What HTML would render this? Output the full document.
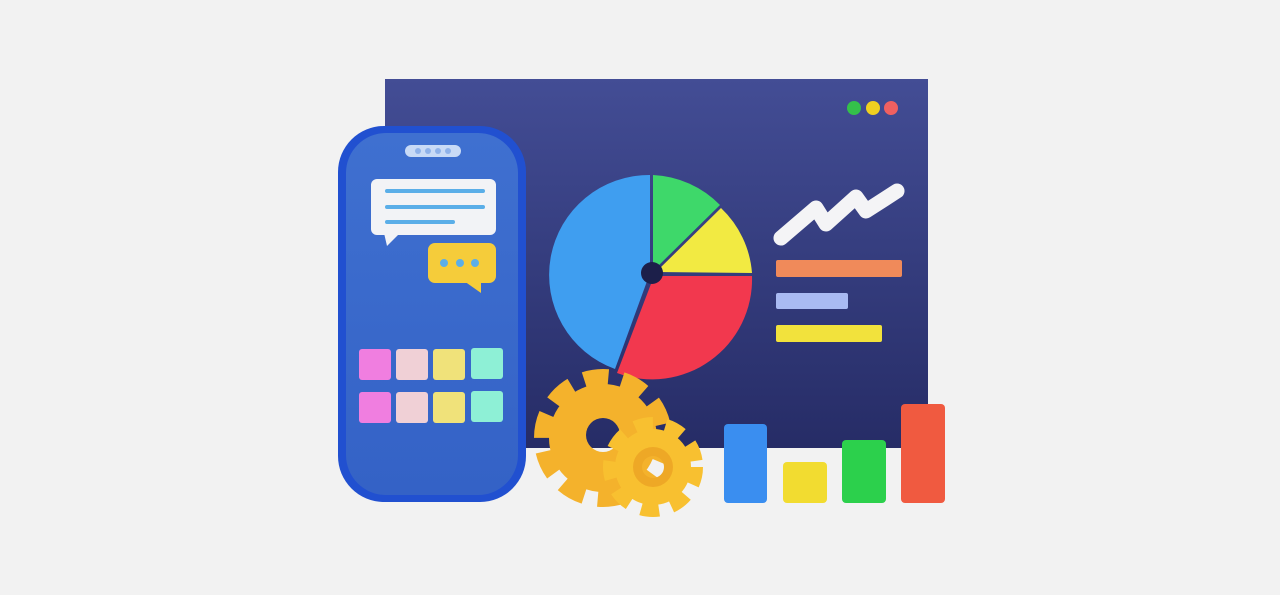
<!DOCTYPE html>
<html><head><meta charset="utf-8"><style>
html,body{margin:0;padding:0;background:#f2f2f2;width:1280px;height:595px;overflow:hidden}
</style></head><body>
<svg width="1280" height="595" viewBox="0 0 1280 595" xmlns="http://www.w3.org/2000/svg">
<defs>
<linearGradient id="bd" x1="0" y1="0" x2="0" y2="1"><stop offset="0" stop-color="#434d95"/><stop offset="1" stop-color="#262c66"/></linearGradient>
<linearGradient id="ph" x1="0" y1="0" x2="0" y2="1"><stop offset="0" stop-color="#3f70d0"/><stop offset="1" stop-color="#3462c6"/></linearGradient>
<mask id="m1"><rect x="0" y="0" width="1280" height="595" fill="#fff"/><circle cx="603" cy="435" r="17" fill="#000"/></mask>
<mask id="m2"><rect x="0" y="0" width="1280" height="595" fill="#fff"/><circle cx="653" cy="467" r="11" fill="#000"/></mask>
</defs>
<rect width="1280" height="595" fill="#f2f2f2"/>
<rect x="385" y="79" width="543" height="369" fill="url(#bd)"/>
<circle cx="854" cy="108" r="7" fill="#34c04a"/>
<circle cx="873" cy="108" r="7" fill="#f0d020"/>
<circle cx="891" cy="108" r="7" fill="#f06060"/>
<!-- pie -->
<path d="M650,273 L650,175 A100,100 0 0 0 615,369 Z" fill="#3f9ef0"/>
<path d="M653,271 L653,175 A100,100 0 0 1 720,205 Z" fill="#3ed86a"/>
<path d="M656,272 L721,208 A100,100 0 0 1 752,273 Z" fill="#f2ea42"/>
<path d="M654,276 L752,276 A100,100 0 0 1 617,373 Z" fill="#f2384e"/>
<circle cx="652" cy="273" r="11" fill="#1c1f4a"/>
<!-- zigzag -->
<path d="M781,238 L816,208 L826,224 L856,197 L866,211 L897,191" fill="none" stroke="#f4f4f6" stroke-width="15" stroke-linejoin="round" stroke-linecap="round"/>
<rect x="776" y="260" width="126" height="17" rx="2" fill="#f08a5a"/>
<rect x="776" y="293" width="72" height="16" rx="2" fill="#a9baf2"/>
<rect x="776" y="325" width="106" height="17" rx="2" fill="#f2e23c"/>
<!-- phone -->
<rect x="338" y="126" width="188" height="376" rx="46" fill="#2150d0"/>
<rect x="346" y="133" width="172" height="362" rx="40" fill="url(#ph)"/>
<rect x="405" y="145" width="56" height="12" rx="6" fill="#c8daf6"/>
<circle cx="418" cy="151" r="3" fill="#8fb2ea"/><circle cx="428" cy="151" r="3" fill="#8fb2ea"/><circle cx="438" cy="151" r="3" fill="#8fb2ea"/><circle cx="448" cy="151" r="3" fill="#8fb2ea"/>
<rect x="371" y="179" width="125" height="56" rx="6" fill="#f2f3f6"/>
<path d="M384,233 L387,246 L400,233 Z" fill="#f2f3f6"/>
<rect x="385" y="189" width="100" height="4" rx="2" fill="#5aaee8"/>
<rect x="385" y="205" width="100" height="4" rx="2" fill="#5aaee8"/>
<rect x="385" y="220" width="70" height="4" rx="2" fill="#5aaee8"/>
<rect x="428" y="243" width="68" height="40" rx="7" fill="#f5cc3a"/>
<path d="M464,281 L481,293 L481,281 Z" fill="#f5cc3a"/>
<circle cx="444" cy="263" r="4" fill="#5aaee8"/><circle cx="460" cy="263" r="4" fill="#5aaee8"/><circle cx="475" cy="263" r="4" fill="#5aaee8"/>
<g>
<rect x="359" y="349" width="32" height="31" rx="3" fill="#f07ee0"/>
<rect x="396" y="349" width="32" height="31" rx="3" fill="#f0d0d6"/>
<rect x="433" y="349" width="32" height="31" rx="3" fill="#f0e27a"/>
<rect x="471" y="348" width="32" height="31" rx="3" fill="#8ef0d6"/>
<rect x="359" y="392" width="32" height="31" rx="3" fill="#f07ee0"/>
<rect x="396" y="392" width="32" height="31" rx="3" fill="#f0d0d6"/>
<rect x="433" y="392" width="32" height="31" rx="3" fill="#f0e27a"/>
<rect x="471" y="391" width="32" height="31" rx="3" fill="#8ef0d6"/>
</g>
<!-- gears -->
<g mask="url(#m1)">
<circle cx="603" cy="438" r="54" fill="#f4b22c"/>
<circle cx="603" cy="438" r="60" fill="none" stroke="#f4b22c" stroke-width="18" stroke-dasharray="24 13.7"/>
</g>
<g mask="url(#m2)">
<circle cx="653" cy="467" r="38" fill="#f8c030"/>
<circle cx="653" cy="467" r="43" fill="none" stroke="#f8c030" stroke-width="14" stroke-dasharray="18 12.7"/>
<circle cx="653" cy="467" r="20" fill="#eea826"/>
</g>
<!-- bars -->
<rect x="724" y="424" width="43" height="79" rx="4" fill="#3a8ef0"/>
<rect x="783" y="462" width="44" height="41" rx="4" fill="#f2dc30"/>
<rect x="842" y="440" width="44" height="63" rx="4" fill="#2cd04c"/>
<rect x="901" y="404" width="44" height="99" rx="4" fill="#f05a40"/>
</svg>
</body></html>
